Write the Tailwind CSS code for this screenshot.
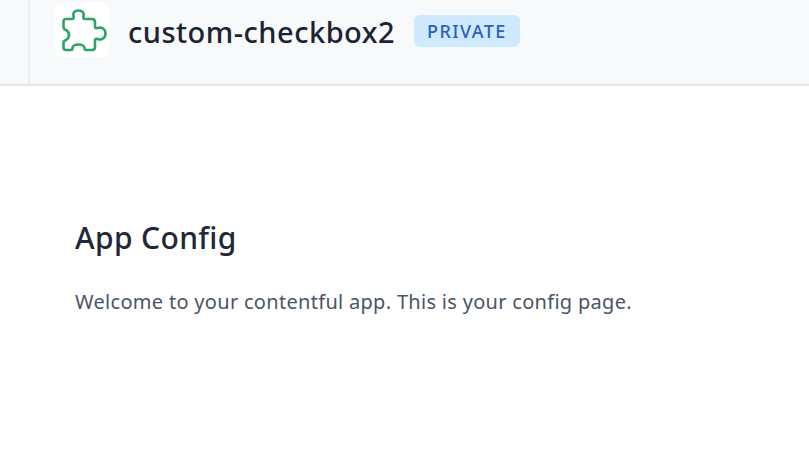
<!DOCTYPE html>
<html lang="en">
  <head>
    <meta charset="UTF-8" />
    <script src="https://cdn.jsdelivr.net/npm/@tailwindcss/browser@4"></script>
    <title>App Config</title>
  </head>
  <body class="bg-white font-['Noto_Sans',sans-serif] h-[452px] overflow-hidden">
    <!-- header -->
    <header class="h-[86px] bg-[#f7f9fa] border-b-2 border-[#e1e6ec] flex">
      <div class="w-[30px] h-full border-r-2 border-[#e9edf1]"></div>
      <div class="flex items-start pl-[25px] pt-[3px]">
        <div class="w-[54px] h-[54px] bg-white rounded-[6px] flex items-center justify-center">
          <svg width="54" height="54" viewBox="0 0 54 54" fill="none" stroke="#2aa565" stroke-width="2.6" stroke-linejoin="round" stroke-linecap="round">
            <path d="M11 16 H17 C18.5 16 19 15 18.5 13.5 C17.5 10 19.5 7.5 23.5 7.5 C27.5 7.5 29.5 10 28.5 13.5 C28 15 28.5 16 30 16 H37 C39 16 40 17 40 19 V23.5 C40 25 41 25.5 42.5 25 C46.5 23.5 50.5 26 50.5 30.5 C50.5 35 46.5 37.5 42.5 36 C41 35.5 40 36 40 37.5 V44 C40 46 39 47 37 47 H31 C29.5 47 29.5 46 29.5 45 C29.5 43 27 41.5 23.5 41.5 C20 41.5 17.5 43 17.5 45 C17.5 46 17.5 47 16 47 H11 C9.5 47 8.5 46 8.5 44 V39.5 C8.5 38.5 9 38 10 37.5 C12.5 36.5 14 34.5 14 32 C14 29.5 12.5 27.5 10 26.5 C9 26 8.5 25.5 8.5 24.5 V18.5 C8.5 17 9.5 16 11 16 Z" />
          </svg>
        </div>
        <h1 class="ml-[19px] mt-[9px] text-[29px] leading-[40px] font-medium text-[#1b2433] tracking-[0.5px]">custom-checkbox2</h1>
        <span class="ml-[19px] mt-[12px] h-[32px] px-[13px] flex items-center rounded-[6px] bg-[#cfe9ff] text-[#2a5fc4] text-[18px] font-medium tracking-[1.4px]">PRIVATE</span>
      </div>
    </header>
    <!-- config page -->
    <main class="pl-[75px] pt-[132px]">
      <h2 class="text-[30px] leading-[40px] font-medium text-[#1f2838] tracking-[0.35px]">App Config</h2>
      <p class="mt-[30px] text-[20px] leading-[28px] text-[#4a5565] tracking-[0.3px]">Welcome to your contentful app. This is your config page.</p>
    </main>
  </body>
</html>
